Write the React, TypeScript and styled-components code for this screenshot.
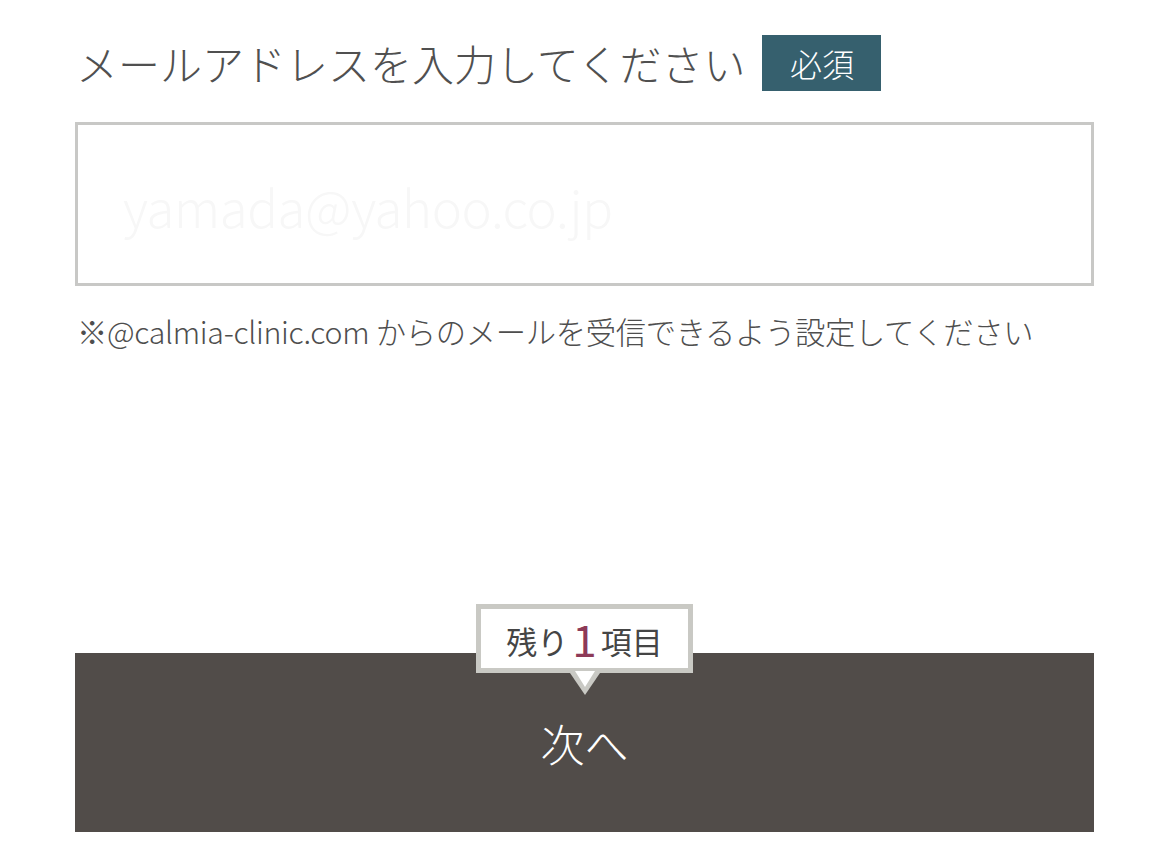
import styled, { createGlobalStyle } from "styled-components";

const GlobalStyle = createGlobalStyle`
  html, body {
    margin: 0;
    padding: 0;
    background: #ffffff;
  }
  body {
    font-family: "Noto Sans CJK JP", "Noto Sans", sans-serif;
    font-weight: 300;
    color: #4a4a4a;
  }
`;

const Page = styled.div`
  width: 1169px;
  height: 859px;
  box-sizing: border-box;
  padding: 35px 75px 0;
  display: flex;
  flex-direction: column;
`;

const LabelRow = styled.div`
  display: flex;
  align-items: center;
  gap: 17px;
  height: 56px;
`;

const Label = styled.h2`
  margin: 0 0 0 1px;
  font-size: 42px;
  font-weight: 300;
  color: #505050;
  line-height: 1;
`;

const Required = styled.span`
  display: inline-flex;
  align-items: center;
  justify-content: center;
  width: 119px;
  height: 56px;
  background: #36606e;
  color: #ffffff;
  font-size: 32px;
  font-weight: 300;
`;

const Input = styled.input`
  margin-top: 31px;
  box-sizing: border-box;
  width: 100%;
  height: 164px;
  border: 3px solid #c8c8c6;
  border-radius: 0;
  padding: 4px 0 0 45px;
  font-family: "Noto Sans CJK JP", "Noto Sans", sans-serif;
  font-weight: 300;
  font-size: 51px;
  letter-spacing: -0.4px;
  color: #333;
  outline: none;
  &::placeholder {
    color: #f7f7f7;
  }
`;

const Note = styled.p`
  margin: 23px 0 0 2px;
  font-size: 30.3px;
  line-height: 44px;
  font-weight: 300;
  color: #4e4e4e;
  letter-spacing: -0.3px;
`;

const Footer = styled.div`
  margin-top: auto;
  margin-bottom: 27px;
  position: relative;
`;

const NextButton = styled.button`
  display: flex;
  align-items: center;
  justify-content: center;
  width: 100%;
  height: 179px;
  border: 0;
  border-radius: 0;
  background: #514c49;
  color: #ffffff;
  font-family: "Noto Sans CJK JP", "Noto Sans", sans-serif;
  font-weight: 300;
  font-size: 44px;
  padding: 0;
  cursor: pointer;
`;

const Balloon = styled.div`
  position: absolute;
  left: 401px;
  top: -49px;
  width: 217px;
  height: 69px;
  box-sizing: border-box;
  border: 5px solid #c9c9c4;
  background: #ffffff;
  display: flex;
  align-items: center;
  justify-content: center;
  padding-top: 4px;
  font-size: 31px;
  font-weight: 400;
  color: #454545;
  &::before {
    content: "";
    position: absolute;
    left: 50%;
    bottom: -27px;
    transform: translateX(-50%);
    border-style: solid;
    border-width: 22px 15px 0;
    border-color: #c9c9c4 transparent transparent;
  }
  &::after {
    content: "";
    position: absolute;
    left: 50%;
    bottom: -19px;
    transform: translateX(-50%);
    border-style: solid;
    border-width: 16px 10px 0;
    border-color: #ffffff transparent transparent;
  }
`;

const Count = styled.span`
  font-size: 44px;
  font-weight: 400;
  color: #8d3a58;
  margin: 0 4px;
  line-height: 1;
  position: relative;
  top: -3px;
`;

export default function App() {
  return (
    <>
      <GlobalStyle />
      <Page>
        <LabelRow>
          <Label>メールアドレスを入力してください</Label>
          <Required>必須</Required>
        </LabelRow>
        <Input type="email" placeholder="yamada@yahoo.co.jp" />
        <Note>※@calmia-clinic.com からのメールを受信できるよう設定してください</Note>
        <Footer>
          <Balloon>
            残り<Count>1</Count>項目
          </Balloon>
          <NextButton type="button">次へ</NextButton>
        </Footer>
      </Page>
    </>
  );
}
